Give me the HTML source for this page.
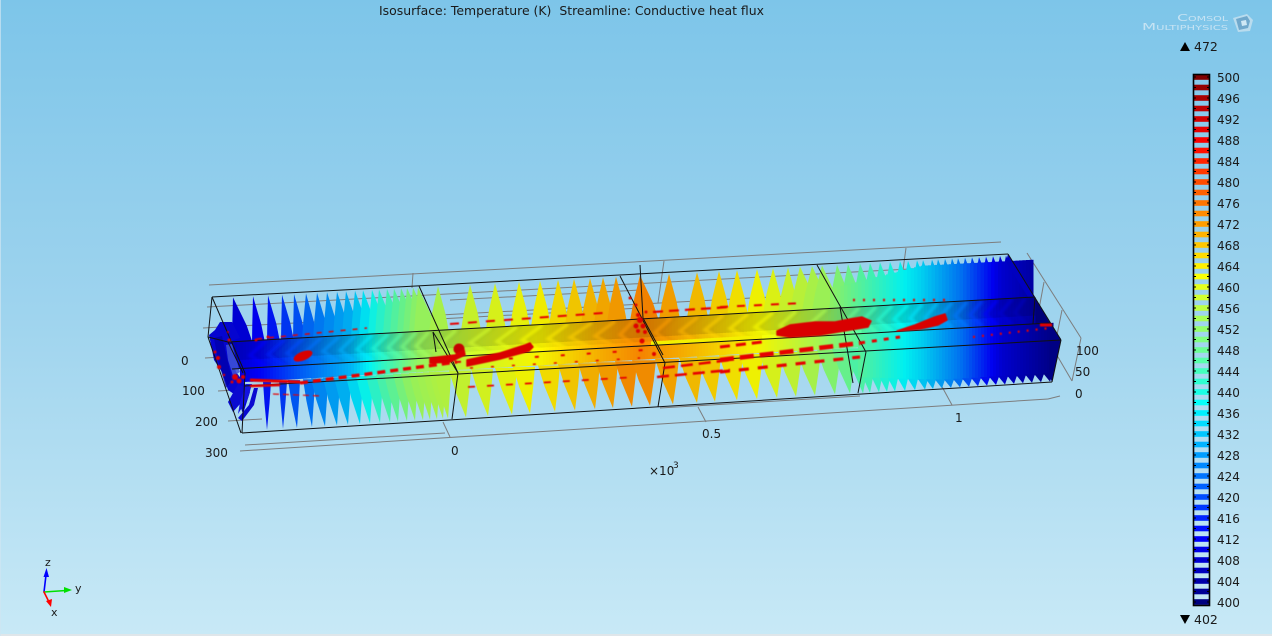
<!DOCTYPE html>
<html><head><meta charset="utf-8"><style>
html,body{margin:0;padding:0;width:1272px;height:636px;overflow:hidden}
svg{display:block;position:absolute;left:0;top:0}
text{font-family:"DejaVu Sans","Liberation Sans",sans-serif;font-size:12px;fill:#1a1a1a}
</style></head><body>
<svg id="s" width="1272" height="636" viewBox="0 0 1272 636" xmlns="http://www.w3.org/2000/svg">
<defs>
<linearGradient id="bg" x1="0" y1="0" x2="0" y2="1"><stop offset="0" stop-color="#7dc5e9"/><stop offset=".5" stop-color="#9fd4ee"/><stop offset="1" stop-color="#c8e9f6"/></linearGradient>
<filter id="b1" x="-10%" y="-10%" width="120%" height="120%"><feGaussianBlur stdDeviation="1.3"/></filter>
<filter id="b2"><feGaussianBlur stdDeviation="0.4"/></filter>
</defs>
<rect width="1272" height="636" fill="url(#bg)"/>
<rect x="0" y="634" width="1272" height="2" fill="#dfe6ea"/>
<rect x="0" y="0" width="1" height="636" fill="#cfe6f2" opacity=".7"/>
<g id="grey" fill="none" stroke="#7d7d7d" stroke-width="1"></g>
<g id="up"></g>
<g id="tube"></g>
<g id="low"></g>
<g id="left"></g>
<g id="black" fill="none" stroke="#111" stroke-width="1"></g>
<g id="red" fill="none" stroke="#e60000" filter="url(#b2)"></g>
<g id="cb"></g>

<text x="379" y="15" xml:space="preserve" textLength="385" lengthAdjust="spacingAndGlyphs" style="font-size:12.5px;white-space:pre">Isosurface: Temperature (K)  Streamline: Conductive heat flux</text>

<g>
<text x="1177" y="21" textLength="51" lengthAdjust="spacingAndGlyphs" style="font-size:10px;fill:#c6e3f3;font-variant:small-caps">Comsol</text>
<text x="1142" y="30" textLength="86" lengthAdjust="spacingAndGlyphs" style="font-size:10px;fill:#c6e3f3;font-variant:small-caps">Multiphysics</text>
<polygon points="1233,18 1247,14 1253,20 1250,31 1238,32" fill="#b9dcee"/>
<polygon points="1236,19 1247,16 1250,21 1248,28 1239,30" fill="#6fa8cc"/>
<polygon points="1241,21 1246,20 1247,25 1242,26" fill="#cfe8f5"/>
</g>

<polygon points="1180,51 1190,51 1185,42" fill="#000"/>
<text x="1194" y="51" style="font-size:12.5px">472</text>
<polygon points="1180,615 1190,615 1185,624" fill="#000"/>
<text x="1194" y="624" style="font-size:12.5px">402</text>

<g>
<text x="1217" y="82">500</text><text x="1217" y="103">496</text><text x="1217" y="124">492</text><text x="1217" y="145">488</text>
<text x="1217" y="166">484</text><text x="1217" y="187">480</text><text x="1217" y="208">476</text><text x="1217" y="229">472</text>
<text x="1217" y="250">468</text><text x="1217" y="271">464</text><text x="1217" y="292">460</text><text x="1217" y="313">456</text>
<text x="1217" y="334">452</text><text x="1217" y="355">448</text><text x="1217" y="376">444</text><text x="1217" y="397">440</text>
<text x="1217" y="418">436</text><text x="1217" y="439">432</text><text x="1217" y="460">428</text><text x="1217" y="481">424</text>
<text x="1217" y="502">420</text><text x="1217" y="523">416</text><text x="1217" y="544">412</text><text x="1217" y="565">408</text>
<text x="1217" y="586">404</text><text x="1217" y="607">400</text>
</g>

<text x="181" y="365">0</text>
<text x="182" y="395">100</text>
<text x="195" y="426">200</text>
<text x="205" y="457">300</text>
<text x="451" y="455">0</text>
<text x="702" y="438">0.5</text>
<text x="955" y="422">1</text>
<text x="649" y="475">×10</text><text x="673" y="468" style="font-size:9px">3</text>
<text x="1076" y="355">100</text>
<text x="1075" y="376">50</text>
<text x="1075" y="398">0</text>

<g fill="none" stroke-linecap="round">
<line x1="44" y1="592" x2="46" y2="575" stroke="#0000ff" stroke-width="1.6"/>
<polygon points="46.5,568 43.5,577 49,577" fill="#0000ff"/>
<line x1="44" y1="592" x2="66" y2="590.5" stroke="#00e000" stroke-width="1.6"/>
<polygon points="72,590 64,587 64,593" fill="#00e000"/>
<line x1="44" y1="592" x2="49" y2="602" stroke="#ff0000" stroke-width="1.6"/>
<polygon points="51,607 46,601 52,599" fill="#ff0000"/>
</g>
<text x="45" y="566" style="font-size:11px">z</text>
<text x="75" y="592" style="font-size:11px">y</text>
<text x="51" y="616" style="font-size:11px">x</text>
</svg>
<script>
(function(){
var NS="http://www.w3.org/2000/svg";
function el(p,n,a){var e=document.createElementNS(NS,n);for(var k in a)e.setAttribute(k,a[k]);document.getElementById(p).appendChild(e);return e}
function T(x){return 297-(x-212)*43/796}
function L2(x){return 342-(x-228)*45/807}
function M1(x){return 369-(x-232)*46/818}
function M2(x){return 386-(x-245)*46/816}
function B(x){return 433-(x-242)*51/810}
function cl(v){return Math.max(0,Math.min(1,v))}
function jet(t,m){m=m||1;var r=cl(1.5-Math.abs(4*t-3)),g=cl(1.5-Math.abs(4*t-2)),b=cl(1.5-Math.abs(4*t-1));
return "rgb("+Math.round(r*255*m)+","+Math.round(g*255*m)+","+Math.round(b*255*m)+")"}
var tb=[[200,.05],[260,.13],[300,.22],[350,.31],[380,.42],[418,.53],[470,.58],[540,.63],[600,.7],[640,.74],[700,.68],[760,.62],[820,.54],[880,.42],[920,.34],[960,.24],[1000,.09],[1060,.0]];
function tx(x){for(var i=1;i<tb.length;i++){if(x<=tb[i][0]){var a=tb[i-1],b=tb[i];return a[1]+(b[1]-a[1])*(x-a[0])/(b[0]-a[0])}}return .0}
function col(x,m){return jet(tx(x),m||.94)}
function P(p,pts,f,o){var a={points:pts.map(function(q){return q[0].toFixed(1)+","+q[1].toFixed(1)}).join(" "),fill:f};if(o!=null)a.opacity=o;return el(p,"polygon",a)}
function Ln(p,a,b,c,d,ex){var at={x1:a,y1:b,x2:c,y2:d};for(var k in ex||{})at[k]=ex[k];return el(p,"line",at)}
function leaf(p,ax,ay,yb,wl,wr,f){
 var ym=ay+(yb-ay)*.6;
 P(p,[[ax,ay],[ax+wr*.68,ym],[ax+wr,yb],[ax-wl,yb],[ax-wl*.68,ym]],f);
}

/* grey axes */
Ln("grey",209,285,1001,242);Ln("grey",240,451,1048,399);
Ln("grey",207,307,1001,264);Ln("grey",203,328,1027,283);Ln("grey",205,358,240,356);
Ln("grey",218,391,250,389);Ln("grey",228,421,262,419);
Ln("grey",413,273,412,288);Ln("grey",443,422,450,437);
Ln("grey",664,261,658,303);Ln("grey",698,407,706,422);
Ln("grey",906,248,903,270);Ln("grey",940,383,952,405);
Ln("grey",1027,253,1081,338);Ln("grey",1081,338,1072,381);Ln("grey",1072,381,1048,340);
Ln("grey",1044,282,1037,320);Ln("grey",1062,310,1054,350);Ln("grey",1048,399,1060,396);
Ln("grey",420,320,640,308);Ln("grey",450,300,640,290);Ln("grey",660,320,830,310);
Ln("grey",245,445,445,433);Ln("grey",660,408,860,396);

/* upper leaves */
var ux=[233,253,268,282,294,306,317,327,337,346,355,363,372,379,387,394,401,407,413,418,438,470,495,519,540,558,574,590,603,616,640,669,697,719,737,757,773,788,800,812,822,837,848,860,870,880,890,900,908,917,923,932,938,945,952,958,965,972,979,986,993,1000,1006];
ux.forEach(function(x){
 var wl,wr,yb=L2(x)+2;
 if(x<300){wl=1;wr=x<250?20:12}
 else if(x<420){wl=4;wr=11+(x-300)*.07}
 else if(x<620){wl=9;wr=11}
 else if(x<830){wl=10;wr=x>790||x==640?19:11}
 else {wl=8;wr=16}
 leaf("up",x,T(x)+1.5,yb,wl,wr,col(x));
});
/* right top band */
for(var x=830;x<=1032;x+=3.5){
 var off=x<920?25-(x-830)*.2:7;
 P("up",[[x,T(x)+off],[x+4,T(x)+off],[x+4,L2(x)+1],[x,L2(x)+1]],col(x));
}
P("up",[[1008,254],[1035,297],[1028,297],[1006,262]],col(1010));
P("up",[[1035,297],[1050,323],[1033,324]],col(1040,.75));

/* tube */
var step=3;
for(var x=228;x<1034;x+=step){
 P("tube",[[x,L2(x)],[x+step+.5,L2(x+step)],[x+step+.5,M1(x+step)],[x,M1(x)]],col(x,.82));
 var mid=(L2(x)+M1(x))/2;
 P("tube",[[x,mid+5],[x+step+.5,mid+5],[x+step+.5,M1(x)],[x,M1(x)]],col(x,.94));
}
var ch=el("tube","g",{filter:"url(#b1)",fill:"none"});
function chev(x,w,c,sw,o){var t=L2(x+w)+1,b=M1(x+w)-1,m=(L2(x)+M1(x))/2+1;
 var e=document.createElementNS(NS,"polyline");
 e.setAttribute("points",(x+w)+","+t+" "+x+","+m+" "+(x+w)+","+b);
 e.setAttribute("stroke",c);e.setAttribute("stroke-width",sw);e.setAttribute("opacity",o);e.setAttribute("fill","none");ch.appendChild(e)}
[[250,16],[268,16],[287,16],[305,16],[323,16],[340,15],[357,15],[373,15],[388,14],[402,14],[416,13],[440,16],[470,20],[497,20],[522,20],[548,20],[570,22],[595,20],[620,14],[655,16],[680,18],[705,18],[730,18],[755,18],[780,16],[810,16],[845,14],[862,14],[878,14],[894,14],[910,12],[925,12],[940,12],[955,12],[970,12],[985,12],[1000,12],[1015,10]].forEach(function(v){
 chev(v[0],v[1],col(v[0]+4,1),3.4,.6);
 chev(v[0]+5,v[1],col(v[0]+4,.62),1.6,.2);
});
/* front bright strip section 2-3 */
for(var x=450;x<860;x+=3){P("tube",[[x,M1(x)-4],[x+3.5,M1(x+3)-4],[x+3.5,M1(x+3)],[x,M1(x)]],x>650&&x<760?"#f4f000":col(x,1))}

/* band between M1 and spikes */
for(var x=240;x<=860;x+=3){P("low",[[x,M1(x)],[x+3.5,M1(x+3)],[x+3.5,M2(x+3)-4],[x,M2(x)-4]],col(x,.96))}

/* lower leaves */
var lx=[267,283,297,312,325,337,348,360,370,380,390,398,407,415,423,430,437,443,448,466,488,512,530,555,575,595,613,632,650,673,697,715,737,757,777,796,815,835,850,863];
lx.forEach(function(x){
 var wl,wr;
 if(x<290){wl=4;wr=4}
 else if(x<320){wl=9;wr=3}
 else if(x<450){wl=14;wr=3}
 else if(x<640){wl=17;wr=5}
 else {wl=18;wr=6}
 var yb=M2(x)-3,ay=B(x)-1.5,ym=ay-(ay-yb)*.55;
 P("low",[[x,ay],[x+wr*.62,ym],[x+wr,yb],[x-wl,yb],[x-wl*.62,ym]],col(x));
});
/* right front band */
for(var x=858;x<=1050;x+=3){
 var of2=x<950?16-(x-858)*.09:8;
 P("low",[[x,M1(x)],[x+3.5,M1(x+3)],[x+3.5,B(x+3)-of2],[x,B(x)-of2]],col(x));
}
P("low",[[1050,323],[1061,339],[1052,382],[1049,375]],col(1052));
[863,870,879,887,895,905,915,925,933,942,951,960,969,978,987,996,1005,1014,1023,1032,1041,1050].forEach(function(x){
 var of2=x<950?16-(x-858)*.09:8;
 P("low",[[x,B(x)-.5],[x+3,B(x)-of2-1],[x-7,B(x)-of2-1]],col(x));
});

/* left swirl */
var L="left";
P(L,[[220,322],[232,322],[240,338],[228,342],[236,372],[246,385],[250,392],[243,414],[237,396],[228,390],[222,372],[214,360],[209,335],[215,330]],"#0505d0");
P(L,[[226,345],[232,344],[240,372],[233,376],[228,360]],"#4055d8",.85);
P(L,[[214,338],[222,336],[232,380],[226,388],[218,360]],"#0000a8",.75);
P(L,[[238,384],[246,388],[240,404],[233,412],[228,402]],"#0a0ad0");
P(L,[[254,388],[258,388],[254,405],[242,421],[238,418],[249,405]],"#0a0ad0");
P(L,[[246,384],[252,384],[248,398],[238,414],[240,402]],"#1414e0");

/* black frame */
function K(a,b,c,d){Ln("black",a,b,c,d)}
K(212,297,1008,254);K(228,342,1035,297);K(232,369,1050,323);K(245,386,1061,340);K(242,433,1052,382);
K(212,297,208,337);K(208,337,241,433);K(212,297,245,373);K(245,373,242,433);K(208,337,228,342);K(228,342,243,373);
K(419,286,458,373);K(458,373,452,419);K(433,332,436,352);K(433,332,458,373);
K(620,276,665,363);K(665,363,658,407);K(643,318,663,355);K(640,265,643,318);
K(817,265,866,352);K(866,352,858,393);K(840,307,853,383);
K(1008,254,1061,340);K(1061,340,1052,382);K(1035,297,1033,324);

/* red streamlines */
function R(a,b,c,d,w,da,col2){var at={stroke:col2||"#e60000","stroke-width":w};if(da)at["stroke-dasharray"]=da;return Ln("red",a,b,c,d,at)}
R(300,383,457,362,3.4,"8 5");
R(720,360,860,343,4.6,"14 6");
R(720,372,860,357,3.2,"10 9");
R(720,347,762,342,3,"10 6");
R(457,362,660,349,2,"4 22");
R(250,380,300,382,3,"none");
R(250,386,280,385,2.6);
R(273,394,323,396,1.2,"6 4");
R(257,339,367,328,1.5,"5 7");
R(450,324,603,313,2,"9 9");
R(653,312,730,307,2.2,"10 6");
R(720,307,803,303,2,"8 9");
R(468,387,637,377,1.8,"7 12");
R(657,377,730,370,2.6,"12 6");
R(663,368,730,360,2.6,"12 6");
R(470,368,640,358,1.5,"3 18");
R(860,343,900,337,3,"5 7");
R(853,300,945,300,2.4,"2 8");
R(973,337,1050,328,2.2,"2 7");
Ln("red",1040,325,1052,325,{stroke:"#e60000","stroke-width":3});

function RP(pts){var p=P("red",pts,"#d90000");p.setAttribute("stroke","#d90000");p.setAttribute("stroke-width","1.5");p.setAttribute("stroke-linejoin","round")}
el("red","ellipse",{cx:303,cy:356,rx:10,ry:4.5,fill:"#d90000",stroke:"none",transform:"rotate(-22 303 356)"});
el("red","circle",{cx:459,cy:349,r:5.5,fill:"#c40000",stroke:"none"});
RP([[430,358],[455,355],[464,350],[465,355],[450,362],[430,363]]);
RP([[467,360],[500,353],[525,345],[530,343],[533,347],[529,351],[500,359],[467,366]]);
RP([[777,331],[790,325],[815,322],[835,322],[850,319],[862,317],[871,321],[868,327],[850,330],[820,335],[790,337],[777,335]]);
RP([[897,331],[915,325],[935,317],[945,314],[947,320],[938,325],[920,329]]);
[[640,320,3],[636,326,2.5],[643,326,2.5],[638,315,2],[636,305,1.5],[630,298,1.5],[642,341,2.5],[654,354,2],[646,312,1.5],[638,331,2],[645,332,2]].forEach(function(c){el("red","circle",{cx:c[0],cy:c[1],r:c[2],fill:"#e00000",stroke:"none"})});
[[235,377,3],[239,381,2.5],[243,377,2],[232,382,1.5],[215,352,1.5],[218,358,2],[219,367,2],[224,375,1.2],[229,340,1.5],[228,332,1],[256,340,1.5],[268,337,1.5]].forEach(function(c){el("red","circle",{cx:c[0],cy:c[1],r:c[2],fill:"#e00000",stroke:"none"})});

/* colour bar */
for(var k=0;k<=50;k++){
 var t=(100-2*k)/100,y=77+10.5*k;
 var y0=Math.max(75,y-2.8),y1=Math.min(605,y+2.8);
 el("cb","rect",{x:1194,y:y0,width:15,height:y1-y0,fill:jet(t)});
 el("cb","rect",{x:1194,y:y-.5,width:2,height:1,fill:"#000"});
 el("cb","rect",{x:1207,y:y-.5,width:2,height:1,fill:"#000"});
}
el("cb","rect",{x:1193.5,y:74.5,width:16,height:531,fill:"none",stroke:"#000","stroke-width":1.6});
})();
</script>
</body></html>
